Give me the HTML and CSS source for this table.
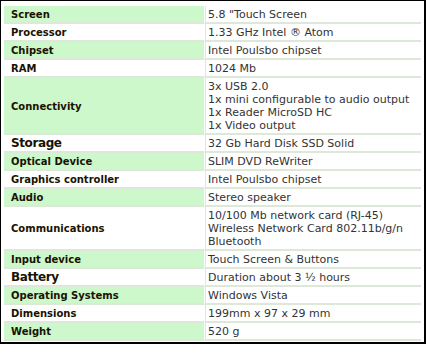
FILE: index.html
```html
<!DOCTYPE html>
<html>
<head>
<meta charset="utf-8">
<link rel="stylesheet" href="styles.css">
</head>
<body>
<div class="frame">
<table class="specs">
<tr class="alt"><th>Screen</th><td>5.8 "Touch Screen</td></tr>
<tr><th>Processor</th><td>1.33 GHz Intel ® Atom</td></tr>
<tr class="alt"><th>Chipset</th><td>Intel Poulsbo chipset</td></tr>
<tr><th>RAM</th><td>1024 Mb</td></tr>
<tr class="alt"><th>Connectivity</th><td>3x USB 2.0<br>1x mini configurable to audio output<br>1x Reader MicroSD HC<br>1x Video output</td></tr>
<tr><th class="big">Storage</th><td>32 Gb Hard Disk SSD Solid</td></tr>
<tr class="alt"><th>Optical Device</th><td>SLIM DVD ReWriter</td></tr>
<tr><th>Graphics controller</th><td>Intel Poulsbo chipset</td></tr>
<tr class="alt"><th>Audio</th><td>Stereo speaker</td></tr>
<tr><th>Communications</th><td>10/100 Mb network card (RJ-45)<br>Wireless Network Card 802.11b/g/n<br>Bluetooth</td></tr>
<tr class="alt"><th>Input device</th><td>Touch Screen &amp; Buttons</td></tr>
<tr><th class="big">Battery</th><td>Duration about 3 ½ hours</td></tr>
<tr class="alt"><th>Operating Systems</th><td>Windows Vista</td></tr>
<tr><th>Dimensions</th><td>199mm x 97 x 29 mm</td></tr>
<tr class="alt"><th>Weight</th><td>520 g</td></tr>
</table>
</div>
</body>
</html>
```
FILE: styles.css
```css
html, body {
  margin: 0;
  padding: 0;
  background: #fff;
}
.frame {
  width: 426px;
  height: 344px;
  box-sizing: border-box;
  border: 1px solid #000;
  border-right-width: 2px;
  border-bottom-width: 2px;
  padding: 5px 2px 0 3px;
  overflow: hidden;
}
.specs {
  border-collapse: separate;
  border-spacing: 0;
  width: 417px;
  font-family: "DejaVu Sans", Verdana, sans-serif;
  font-size: 11px;
  line-height: 13px;
}
.specs th {
  width: 193px;
  text-align: left;
  font-size: 10px;
  font-weight: bold;
  color: #1a1200;
  padding: 2px 0 1px 7px;
  border-bottom: 2px solid #dde8d8;
  border-right: 1px solid #fff;
  vertical-align: middle;
}
.specs th.big {
  font-size: 12px;
  letter-spacing: -0.4px;
}
.specs td {
  color: #333;
  padding: 2px 2px 1px 2px;
  border-bottom: 2px solid #dde8d8;
  border-left: 1px solid #dde8d8;
  vertical-align: top;
}
.specs tr.alt th {
  background: #ccf8cc;
}
```
